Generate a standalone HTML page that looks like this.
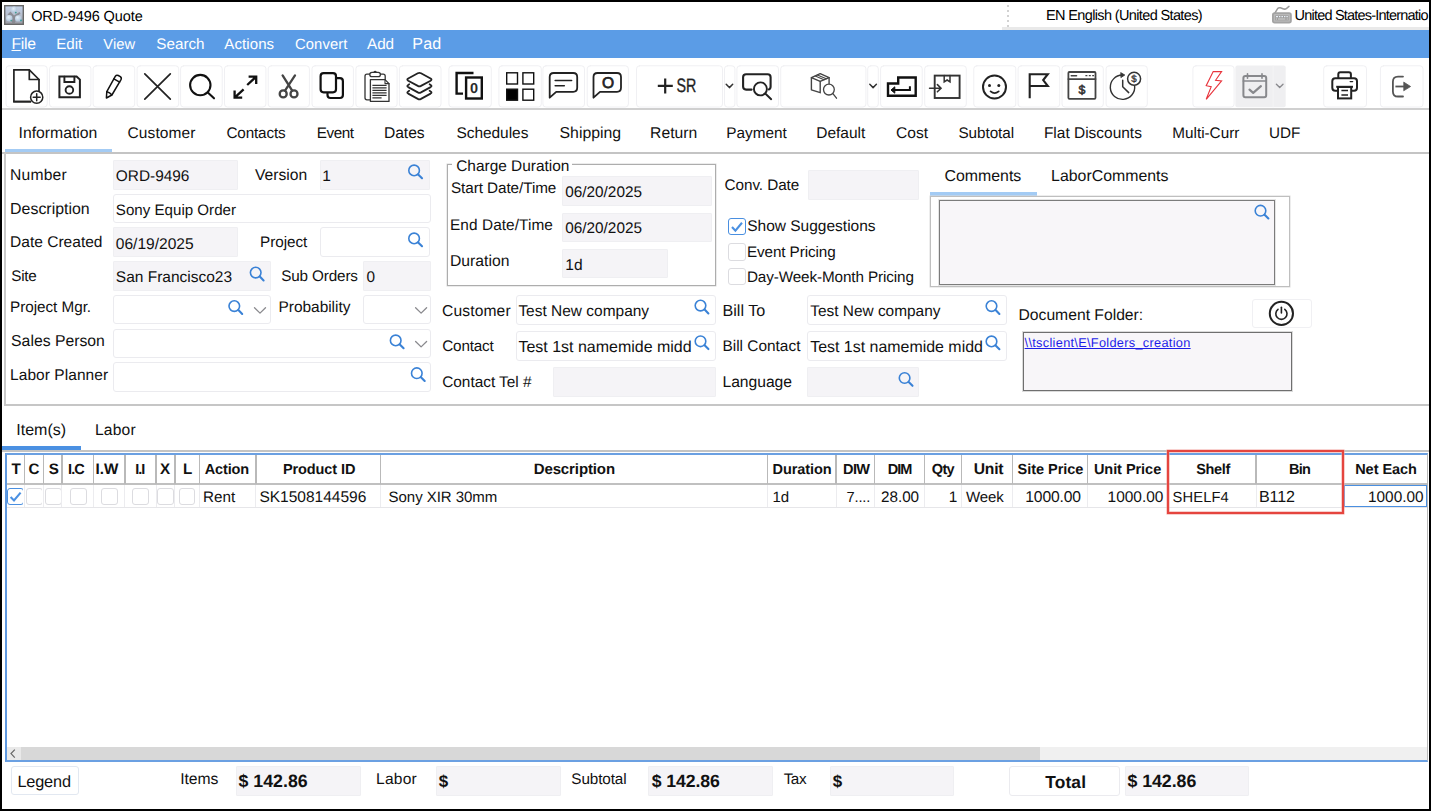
<!DOCTYPE html>
<html><head><meta charset="utf-8"><title>ORD-9496 Quote</title>
<style>
*{box-sizing:border-box;margin:0;padding:0}
html,body{width:1431px;height:811px;overflow:hidden;background:#000}
body{text-rendering:geometricPrecision;font-family:"Liberation Sans",sans-serif;font-size:15.3px;color:#1a1a1a;position:relative}
#win{position:absolute;left:2px;top:2px;width:1426.5px;height:807px;background:#fff;overflow:hidden}
.a{position:absolute;white-space:nowrap}
.x{color:#111}
/* all coords below are relative to page (0,0) via #pg wrapper */
#pg{position:absolute;left:-2px;top:-2px;width:1431px;height:811px}
#title{left:0;top:2px;width:1431px;height:28px;background:#fff}
#menu{left:0;top:30px;width:1431px;height:27.5px;background:#5b9ce6}
#tool{left:0;top:57.5px;width:1431px;height:51px;background:#fff}
.hline{position:absolute;height:2px;background:#c9c9c9}
.fld{position:absolute;border:1px solid #efeff2;background:#f5f4f7;border-radius:1px}
.fld.w{background:#fff;border-color:#ebebef;border-radius:3px}
.cb{position:absolute;width:18px;height:17.4px;border:1px solid #dcdce0;border-radius:3px;background:#fff}
.cb.on{border-color:#4a8fe0}
</style></head><body>
<div id="win"><div id="pg">

<!-- TITLE BAR -->
<div class="a" id="title">
  <svg class="a" style="left:4.3px;top:2.9px" width="20" height="20" viewBox="0 0 20 20"><defs><linearGradient id="ig" x1="0" y1="0" x2="0" y2="1"><stop offset="0" stop-color="#c3d2ea"/><stop offset="0.55" stop-color="#b4bccb"/><stop offset="1" stop-color="#98989f"/></linearGradient><radialGradient id="sp" cx="0.4" cy="0.35" r="0.7"><stop offset="0" stop-color="#e3eef8"/><stop offset="1" stop-color="#a9bfd6"/></radialGradient></defs><rect x="0.7" y="0.7" width="18.6" height="18.6" fill="url(#ig)" stroke="#686868" stroke-width="1.4"/><path d="M3.5 9.5L6.5 6.6L10 10.5L15.5 7L16.5 8.5L13 11.5L10.8 18H8.2L6.8 11.8Z" fill="#85858c" opacity="0.85"/><circle cx="10.1" cy="4.6" r="3" fill="url(#sp)"/><circle cx="5.3" cy="13.3" r="3.2" fill="url(#sp)"/><circle cx="14.2" cy="13.4" r="3.2" fill="url(#sp)"/><circle cx="11.8" cy="7.6" r="0.9" fill="#3f9c90"/><circle cx="7.2" cy="15.6" r="0.8" fill="#3f9c90"/><circle cx="17" cy="15.4" r="0.9" fill="#2f9fa0"/></svg>
    <div class="a" style="left:1007.4px;top:3.2px;width:2px;height:25.4px;background:repeating-linear-gradient(to bottom,#d2d2d2 0,#d2d2d2 2px,transparent 2px,transparent 4.9px)"></div>
    <svg class="a" style="left:1270px;top:3px" width="24" height="20" viewBox="1270 5 24 20"><path d="M1275 12.8L1277.6 8.6Q1278.6 7.4 1280.4 7.8L1283 8.8Q1285 9.6 1286.6 8.4L1289 6.4" fill="none" stroke="#9a9a9a" stroke-width="1.5" stroke-linecap="round"/><rect x="1272.9" y="13.2" width="18" height="9.4" rx="1.8" fill="#b9b9b9" stroke="#a3a3a3" stroke-width="1.8"/><rect x="1275.2" y="15.4" width="13.4" height="5" fill="#9e9e9e"/><path d="M1276 16.6h2M1279 16.6h1.4M1281.4 16.6h1.6M1284 16.6h1.4M1286.4 16.6h1.4" stroke="#e8eef6" stroke-width="1.1"/><path d="M1276 19h1M1278 19h7.4M1286.6 19h1.2" stroke="#d4d4d4" stroke-width="1.2"/></svg>
  </div>

<div class="a" id="tline" style="left:1002px;top:27.2px;width:1427px;height:2.6px;background:#e9e9e9"></div>
<!-- MENU BAR -->
<div class="a" id="menu">
</div>

<!-- TOOLBAR -->
<div class="a" id="tool"></div>
<!--TB0--><svg class="a" style="left:0;top:57px" width="1431" height="53" viewBox="0 57 1431 53" fill="none" stroke-linecap="round" stroke-linejoin="round">
<g fill="#fff" stroke="#f0f0f3" stroke-width="1">
<rect x="6.0" y="65.8" width="41.2" height="41.2" rx="3"/><rect x="49.5" y="65.8" width="41.4" height="41.2" rx="3"/><rect x="93.1" y="65.8" width="41.6" height="41.2" rx="3"/><rect x="137.1" y="65.8" width="41.6" height="41.2" rx="3"/><rect x="180.6" y="65.8" width="41.6" height="41.2" rx="3"/><rect x="224.5" y="65.8" width="41.4" height="41.2" rx="3"/><rect x="268.2" y="65.8" width="41.2" height="41.2" rx="3"/><rect x="312.0" y="65.8" width="41.4" height="41.2" rx="3"/><rect x="355.9" y="65.8" width="41.2" height="41.2" rx="3"/><rect x="399.4" y="65.8" width="41.6" height="41.2" rx="3"/>
<rect x="448.9" y="65.8" width="42.4" height="41.2" rx="3"/><rect x="498.9" y="65.8" width="42.4" height="41.2" rx="3"/><rect x="542.9" y="65.8" width="41.6" height="41.2" rx="3"/><rect x="587.2" y="65.8" width="41.2" height="41.2" rx="3"/>
<rect x="636.5" y="65.8" width="86.0" height="41.2" rx="3"/><rect x="724.5" y="65.8" width="10.4" height="41.2" rx="3"/><rect x="736.9" y="65.8" width="41.6" height="41.2" rx="3"/><rect x="780.7" y="65.8" width="85.2" height="41.2" rx="3"/><rect x="867.7" y="65.8" width="10.6" height="41.2" rx="3"/><rect x="880.6" y="65.8" width="41.6" height="41.2" rx="3"/><rect x="924.7" y="65.8" width="41.6" height="41.2" rx="3"/>
<rect x="973.8" y="65.8" width="42.0" height="41.2" rx="3"/><rect x="1018.1" y="65.8" width="41.6" height="41.2" rx="3"/><rect x="1062.0" y="65.8" width="41.3" height="41.2" rx="3"/><rect x="1106.1" y="65.8" width="41.2" height="41.2" rx="3"/>
<rect x="1192.9" y="65.8" width="41.2" height="41.2" rx="3"/>
<rect x="1323.7" y="65.8" width="42.8" height="41.2" rx="3"/><rect x="1380.4" y="65.8" width="42.6" height="41.2" rx="3"/>
</g>
<rect x="1235.4" y="65.5" width="50.3" height="41.8" rx="2" fill="#efeff1"/><rect x="1272.6" y="65.5" width="1" height="41.8" fill="#f4f4f6"/>
<!-- 1 new doc -->
<g stroke="#222" stroke-width="1.7"><path d="M13.9 69.8H29.3L39 79.5V91.5M30.5 101.7H13.9Z" /><path d="M13.9 69.8V101.7H30.3"/><path d="M29.3 70V79.5H39"/><circle cx="36.7" cy="97.2" r="6.1" fill="#fff" stroke-width="1.5"/><path d="M33.2 97.2H40.2M36.7 93.7V100.7" stroke-width="1.5"/></g>
<!-- 2 save -->
<g stroke="#222" stroke-width="2" stroke-linejoin="miter"><path d="M59.4 76.5H76.6L79.9 79.6V97.2H59.4Z"/><path d="M64.4 76.8V82H74.4V76.8" stroke-width="1.9"/><circle cx="69.4" cy="90" r="3.8" stroke-width="1.9"/></g>
<!-- 3 pencil -->
<g stroke="#111" stroke-width="1.5"><path d="M106.4 98L106.8 91.6L115.4 76.1Q116.5 74.6 118.3 75.5L120.3 76.6Q121.9 77.7 121 79.6L111.9 95Z"/><path d="M106.9 91.7Q109.8 92.2 111.7 94.8"/><path d="M113.9 78.8L119.6 82.1"/></g>
<!-- 4 X -->
<g stroke="#222" stroke-width="1.7"><path d="M144.8 73.9L170.3 99.1M170.3 73.9L144.8 99.1"/></g>
<!-- 5 search -->
<g stroke="#111" stroke-width="2.1"><circle cx="200.3" cy="85.1" r="10.2"/><path d="M207.8 92.6L214 98.3"/></g>
<!-- 6 expand -->
<g stroke="#111" stroke-width="2.3" stroke-linecap="butt" stroke-linejoin="miter"><path d="M247.2 85L255.6 77.2M248.6 76.7H256.2V83.9"/><path d="M243.6 89.3L235.2 97.1M234.6 90.4V97.7H242.2"/></g>
<!-- 7 scissors -->
<g stroke="#444" stroke-width="2.3"><path d="M282.6 75.4L292.2 90.6M295 75.4L285 90.6"/><circle cx="283.2" cy="93.9" r="3.5"/><circle cx="294" cy="93.9" r="3.5"/></g>
<!-- 8 copy -->
<g stroke="#111" stroke-width="2.2"><path d="M337.3 78.2H339.9Q342.9 78.2 342.9 81.2V95Q342.9 98 339.9 98H330.5Q327.5 98 327.5 95V93.6"/><rect x="320.6" y="73.2" width="15.4" height="19.1" rx="3"/></g>
<!-- 9 paste -->
<g stroke="#333" stroke-width="1.3"><rect x="365" y="74.2" width="20.2" height="25.6" rx="2"/><rect x="369.8" y="72.3" width="10.6" height="4.4" rx="2.2" fill="#fff"/><path d="M374 72.1Q375.1 70.6 376.2 72.1"/><path d="M370.4 79.6H385L389 83.6V101.4H370.4Z" fill="#fff"/><path d="M385 79.6V83.6H389" stroke-width="1.1"/><path d="M372.4 85.4H386.6M372.4 87.9H386.6M372.4 90.4H386.6M372.4 92.9H386.6M372.4 95.4H386.6M372.4 97.9H381.6" stroke-width="1.2" stroke-linecap="butt"/></g>
<!-- 10 layers -->
<g stroke="#222" stroke-width="1.8"><path d="M417.8 73.3Q419.4 72.5 421 73.3L430.6 78.5Q432.4 79.6 430.6 80.7L421 85.9Q419.4 86.7 417.8 85.9L408.2 80.7Q406.4 79.6 408.2 78.5Z"/><path d="M409.2 84.3L408.2 84.9Q406.4 86 408.2 87.1L417.8 92.4Q419.4 93.2 421 92.4L430.6 87.1Q432.4 86 430.6 84.9L429.6 84.3"/><path d="M409.2 90.8L408.2 91.4Q406.4 92.5 408.2 93.6L417.8 98.9Q419.4 99.7 421 98.9L430.6 93.6Q432.4 92.5 430.6 91.4L429.6 90.8"/></g>
<!-- 11 copy 0 -->
<g stroke="#111" stroke-width="2.4" stroke-linejoin="miter" stroke-linecap="butt"><path d="M473.5 73H456.6V93.6H463"/><rect x="466.1" y="77.5" width="15.7" height="21" fill="#fff"/></g>
<text x="474" y="93.2" font-family="Liberation Sans, sans-serif" font-weight="bold" font-size="14.5" fill="#2a2a2a" text-anchor="middle">0</text>
<!-- 12 grid -->
<g stroke="#111" stroke-width="1.4" stroke-linejoin="miter"><rect x="506.7" y="72.8" width="10.8" height="11.2"/><rect x="522.9" y="72.8" width="10.8" height="11.2"/><rect x="506.7" y="89.2" width="10.8" height="11" fill="#000"/><rect x="522.9" y="89.2" width="10.8" height="11"/></g>
<!-- 13 chat lines -->
<g stroke="#222" stroke-width="1.8"><path d="M549.7 97.7V77Q549.7 73 553.7 73H573.2Q577.2 73 577.2 77V87.8Q577.2 91.8 573.2 91.8H556.2Z"/><path d="M555.2 80.5H571.6M555.2 85.8H564.3" stroke-width="1.6"/></g>
<!-- 14 chat O -->
<g stroke="#222" stroke-width="1.8"><path d="M593.5 97.7V77Q593.5 73 597.5 73H617Q621 73 621 77V87.8Q621 91.8 617 91.8H600Z"/></g>
<text x="608.1" y="88.4" font-family="Liberation Sans, sans-serif" font-size="15.6" fill="#222" stroke="#222" stroke-width="0.7" text-anchor="middle">O</text>
<!-- 15 +SR -->
<g stroke="#222" stroke-width="2.2" stroke-linecap="butt"><path d="M657.8 85.9H672.8M665.2 78.4V93.4"/></g>
<text x="676.6" y="92.4" font-family="Liberation Sans, sans-serif" font-size="19.4" fill="#222" stroke="#222" stroke-width="0.35" textLength="19.8" lengthAdjust="spacingAndGlyphs">SR</text>
<!-- 16 chevron -->
<path d="M726.2 84.3L729.4 87.6L732.7 84.3" stroke="#333" stroke-width="1.5"/>
<!-- 17 screen search -->
<g stroke="#222" stroke-width="2.1"><path d="M751.6 89.6H746.1Q743.1 89.6 743.1 86.6V77.3Q743.1 74.3 746.1 74.3H767.6Q770.6 74.3 770.6 77.3V86.6Q770.6 89 768.8 89.5"/><circle cx="760.4" cy="88.9" r="6.5" fill="#fff" stroke-width="1.9"/><path d="M765.5 93.8L771.2 99.2" stroke-width="1.9"/></g>
<!-- 18 box search -->
<g stroke="#444" stroke-width="1.4"><path d="M811.4 77.7L820.2 73.7L829.1 77.7L820.2 81.4Z"/><path d="M811.4 77.7V89.8L820.2 92.7V81.4"/><path d="M829.1 77.7V83.5"/><path d="M815.2 76L824 79.8M817.4 75L826.3 78.8" stroke-width="1.1"/><circle cx="828.9" cy="89.6" r="5.4" fill="#fff" stroke-width="1.3"/><path d="M832.9 93.6L836.5 98.2" stroke-width="1.3"/></g>
<!-- 19 chevron -->
<path d="M869.8 84.3L873.1 87.6L876.4 84.3" stroke="#333" stroke-width="1.5"/>
<!-- 20 enter -->
<g stroke="#111" stroke-width="2.4" stroke-linejoin="miter" stroke-linecap="butt"><path d="M898.2 77.5H915.7V95.7H888V83.5H898.2Z"/><path d="M909.9 86.3V90H893.5" stroke-width="2"/><path d="M891 90L894.8 86.8V93.2Z" fill="#111" stroke-width="1"/></g>
<!-- 21 box in -->
<g stroke="#333" stroke-width="1.9" stroke-linejoin="miter"><rect x="934.7" y="75.6" width="24.9" height="22.4"/><path d="M944.2 75.6V81.8L947.1 80L950 81.8V75.6" stroke-width="1.5"/><path d="M929.6 88.2H940.6M937.4 84.6L941 88.2L937.4 91.8" stroke-width="1.6"/></g>
<!-- 22 smiley -->
<g stroke="#222" stroke-width="2"><circle cx="994.5" cy="87" r="11.5"/><circle cx="989.5" cy="85.5" r="1.5" fill="#222" stroke="none"/><circle cx="998.8" cy="85.5" r="1.5" fill="#222" stroke="none"/><path d="M990.6 91.4Q994.6 94.8 998.7 91.4" stroke-width="1.8"/></g>
<!-- 23 flag -->
<g stroke="#222" stroke-width="2.1" stroke-linejoin="miter" stroke-linecap="butt"><path d="M1029.7 98.3V74.2H1047.8L1043.2 80.1L1047.8 86H1029.7"/></g>
<!-- 24 $ window -->
<g stroke="#444" stroke-width="1.8" stroke-linejoin="miter"><rect x="1068.4" y="72" width="27.1" height="26.8" rx="1"/><path d="M1068.4 79.1H1095.5" /><path d="M1071.2 75.7H1076.6" stroke-width="1.4"/><path d="M1085.4 75.7H1087.4M1088.8 75.7H1090.8M1092.2 75.7H1094" stroke-width="1.2" stroke-linecap="butt"/></g>
<text x="1082" y="93.6" font-family="Liberation Sans, sans-serif" font-size="12.4" fill="#333" stroke="#333" stroke-width="0.6" text-anchor="middle">$</text>
<!-- 25 clock $ -->
<g stroke="#333" stroke-width="1.4"><path d="M1122.3 75A12.2 12.2 0 1 0 1134.6 85.6"/><path d="M1121 72.8L1124.8 75L1121.2 77.4Z" fill="#333" stroke-width="0.8"/><path d="M1122.7 80.2V86.8L1128.7 92.6" stroke-width="1.5"/><circle cx="1134.1" cy="78.8" r="6.5" fill="#fff" stroke-width="1.5"/></g>
<text x="1134.1" y="82.3" font-family="Liberation Sans, sans-serif" font-size="9.8" fill="#333" stroke="#333" stroke-width="0.35" text-anchor="middle">$</text>
<!-- 26 lightning -->
<path d="M1213.2 71.6H1221.6L1215.6 80.2L1221.6 80.9L1206.2 99.3L1211.2 86.6L1206.2 85.7Z" stroke="#e8343c" stroke-width="1.1" stroke-linejoin="miter"/>
<!-- 27 calendar -->
<g stroke="#87888c" stroke-width="2"><rect x="1243.4" y="75.9" width="22.8" height="21.4" rx="2"/><path d="M1243.4 81H1266.2" stroke-width="1.7"/><path d="M1247.5 73.8V78.2M1262 73.8V78.2" stroke-width="1.6"/><path d="M1249.5 89.7L1253.2 92.8L1260.9 86.1" stroke-width="2.2"/></g>
<path d="M1276.4 84.3L1279.7 87.4L1283 84.3" stroke="#8a8a8e" stroke-width="1.4"/>
<!-- 29 printer -->
<g stroke="#222" stroke-width="2"><rect x="1332.3" y="78.3" width="24.7" height="12.4" rx="3"/><path d="M1338.3 78V74.2Q1338.3 72.2 1340.3 72.2H1348.9Q1350.9 72.2 1350.9 74.2V78"/><rect x="1338" y="87" width="13.2" height="11.4" fill="#fff" stroke-linejoin="miter"/><path d="M1336.2 86.8H1353" stroke-linecap="butt"/><path d="M1341.4 90.6H1348M1341.4 94.9H1348" stroke-width="1.5" stroke-linecap="butt"/><path d="M1350.2 81.6H1352.6" stroke-width="1.4"/></g>
<!-- 30 exit -->
<g stroke="#555" stroke-width="1.8"><path d="M1403 76.6H1398Q1392.9 76.6 1392.9 81.7V91.4Q1392.9 96.5 1398 96.5H1403"/><path d="M1395.4 86.5H1404.4" stroke-linecap="butt"/><path d="M1404 82.3L1410.6 86.5L1404 90.6Z" fill="#555" stroke-width="0.8"/></g>
</svg>
<!--TB1-->
<div class="hline" style="left:2px;top:108.3px;width:1427px;height:1.7px;background:#d0d0d0"></div>
<div class="a" style="left:5px;top:148.5px;width:107px;height:3.5px;background:#a3cbf4"></div>
<div class="hline" style="left:2px;top:152px;width:1427px;height:1.6px;background:#c4c4c4"></div>
<div class="a" style="left:4.4px;top:153px;width:1.6px;height:251px;background:#c9c9c9"></div>
<div class="hline" style="left:4.4px;top:404px;width:1425px;height:1.6px;background:#c6c6c6"></div>
<!-- left column -->
<div class="fld" style="left:113.4px;top:160px;width:125px;height:29.7px"></div>
<div class="fld" style="left:319.5px;top:160px;width:110.2px;height:29.7px"></div>
<div class="fld w" style="left:113.4px;top:193.7px;width:318px;height:29.7px"></div>
<div class="fld" style="left:113.4px;top:227.4px;width:125px;height:29.7px"></div>
<div class="fld w" style="left:319.5px;top:227.4px;width:110.2px;height:29.7px"></div>
<div class="fld" style="left:113.4px;top:261.1px;width:157.2px;height:29.7px"></div>
<div class="fld" style="left:363.4px;top:261.1px;width:68px;height:29.7px"></div>
<div class="fld w" style="left:113.4px;top:294.8px;width:157.2px;height:29.7px"></div>
<div class="fld w" style="left:363.4px;top:294.8px;width:68px;height:29.7px"></div>
<div class="fld w" style="left:113.4px;top:328.5px;width:318px;height:29.7px"></div>
<div class="fld w" style="left:113.4px;top:362.2px;width:318px;height:29.7px"></div>
<!-- charge duration -->
<div class="a" style="left:447px;top:164px;width:269px;height:121.6px;border:1px solid #adadad;box-shadow:0 0 0 0.5px #d8d8d8"></div>
<div class="fld" style="left:562px;top:176.2px;width:149.8px;height:29.7px"></div>
<div class="fld" style="left:562px;top:212.7px;width:149.8px;height:29.7px"></div>
<div class="fld" style="left:562px;top:248.8px;width:105.8px;height:29.7px"></div>
<!-- conv date & checkboxes -->
<div class="fld" style="left:808.4px;top:170.2px;width:111px;height:29.7px"></div>
<div class="cb on" style="left:728px;top:217.6px"><svg width="15" height="15" viewBox="0 0 15 15" style="position:absolute;left:0;top:0"><path d="M3 8L6.4 11.6L13 3.8" fill="none" stroke="#4a90e2" stroke-width="2.1"/></svg></div>
<div class="cb" style="left:728px;top:243.2px"></div>
<div class="cb" style="left:728px;top:267.8px"></div>
<!-- customer block -->
<div class="fld w" style="left:516.3px;top:295px;width:199.4px;height:29.7px;padding-left:2px"></div>
<div class="fld w" style="left:516.3px;top:331px;width:199.4px;height:29.7px;padding-left:2px"></div>
<div class="fld" style="left:553.3px;top:367.3px;width:162.4px;height:29.7px"></div>
<div class="fld w" style="left:807.4px;top:295px;width:199.4px;height:29.7px;padding-left:2px"></div>
<div class="fld w" style="left:807.4px;top:331px;width:199.4px;height:29.7px;padding-left:2px"></div>
<div class="fld" style="left:807.4px;top:367.3px;width:111.8px;height:29.7px"></div>
<!-- comments -->
<div class="a" style="left:929.7px;top:191.8px;width:107px;height:4px;background:#a3cbf4"></div>
<div class="a" style="left:929.7px;top:195.8px;width:360.8px;height:91px;border:1px solid #bfbfbf;background:#fff;box-shadow:0 0 0 0.5px #dcdcdc"></div>
<div class="a" style="left:939.4px;top:199.8px;width:335.6px;height:84.8px;border:1px solid #7c7c7c;box-shadow:0 0 0 1px rgba(0,0,0,0.10);background:#f8f6f9"></div>
<!-- doc folder -->
<div class="a" style="left:1251.8px;top:299.4px;width:60.2px;height:28.2px;border:1px solid #f0f0f3;border-radius:3px;background:#fff"></div>
<svg class="a" style="left:1268px;top:300px" width="27" height="27" viewBox="0 0 27 27" fill="none" stroke="#222" stroke-linecap="round"><circle cx="13.4" cy="13.4" r="11.6" stroke-width="2"/><path d="M10 9.3A5.6 5.6 0 1 0 16.8 9.3" stroke-width="1.6"/><path d="M13.4 7.2V13" stroke-width="1.6"/></svg>
<div class="a" style="left:1023px;top:331.6px;width:268.6px;height:59px;border:1px solid #6f6f6f;box-shadow:0 0 0 1px rgba(0,0,0,0.14);background:#f8f6f9"></div>
<svg class="a" style="left:0;top:153px" width="1431" height="250" viewBox="0 153 1431 250">
<g transform="translate(408.4 165)"><circle cx="5.7" cy="5.4" r="5.3" fill="none" stroke="#3a82d6" stroke-width="1.6"/><path d="M9.8 9.4L13.6 13.2" stroke="#3a82d6" stroke-width="2.1" stroke-linecap="round"/></g>
<g transform="translate(408.4 233)"><circle cx="5.7" cy="5.4" r="5.3" fill="none" stroke="#3a82d6" stroke-width="1.6"/><path d="M9.8 9.4L13.6 13.2" stroke="#3a82d6" stroke-width="2.1" stroke-linecap="round"/></g>
<g transform="translate(250 267.2)"><circle cx="5.7" cy="5.4" r="5.3" fill="none" stroke="#3a82d6" stroke-width="1.6"/><path d="M9.8 9.4L13.6 13.2" stroke="#3a82d6" stroke-width="2.1" stroke-linecap="round"/></g>
<g transform="translate(228.6 300.7)"><circle cx="5.7" cy="5.4" r="5.3" fill="none" stroke="#3a82d6" stroke-width="1.6"/><path d="M9.8 9.4L13.6 13.2" stroke="#3a82d6" stroke-width="2.1" stroke-linecap="round"/></g>
<g transform="translate(253.5 306.5)"><path d="M1 1.2L6.5 6.6L12 1.2" fill="none" stroke="#8a8a8e" stroke-width="1.3" stroke-linecap="round" stroke-linejoin="round"/></g>
<g transform="translate(414.6 306.5)"><path d="M1 1.2L6.5 6.6L12 1.2" fill="none" stroke="#8a8a8e" stroke-width="1.3" stroke-linecap="round" stroke-linejoin="round"/></g>
<g transform="translate(390 335)"><circle cx="5.7" cy="5.4" r="5.3" fill="none" stroke="#3a82d6" stroke-width="1.6"/><path d="M9.8 9.4L13.6 13.2" stroke="#3a82d6" stroke-width="2.1" stroke-linecap="round"/></g>
<g transform="translate(414.6 340.3)"><path d="M1 1.2L6.5 6.6L12 1.2" fill="none" stroke="#8a8a8e" stroke-width="1.3" stroke-linecap="round" stroke-linejoin="round"/></g>
<g transform="translate(411.1 367.8)"><circle cx="5.7" cy="5.4" r="5.3" fill="none" stroke="#3a82d6" stroke-width="1.6"/><path d="M9.8 9.4L13.6 13.2" stroke="#3a82d6" stroke-width="2.1" stroke-linecap="round"/></g>
<g transform="translate(694.8 300.2)"><circle cx="5.7" cy="5.4" r="5.3" fill="none" stroke="#3a82d6" stroke-width="1.6"/><path d="M9.8 9.4L13.6 13.2" stroke="#3a82d6" stroke-width="2.1" stroke-linecap="round"/></g>
<g transform="translate(694.8 335.9)"><circle cx="5.7" cy="5.4" r="5.3" fill="none" stroke="#3a82d6" stroke-width="1.6"/><path d="M9.8 9.4L13.6 13.2" stroke="#3a82d6" stroke-width="2.1" stroke-linecap="round"/></g>
<g transform="translate(985.8 300.7)"><circle cx="5.7" cy="5.4" r="5.3" fill="none" stroke="#3a82d6" stroke-width="1.6"/><path d="M9.8 9.4L13.6 13.2" stroke="#3a82d6" stroke-width="2.1" stroke-linecap="round"/></g>
<g transform="translate(985.8 336)"><circle cx="5.7" cy="5.4" r="5.3" fill="none" stroke="#3a82d6" stroke-width="1.6"/><path d="M9.8 9.4L13.6 13.2" stroke="#3a82d6" stroke-width="2.1" stroke-linecap="round"/></g>
<g transform="translate(898.9 372.6)"><circle cx="5.7" cy="5.4" r="5.3" fill="none" stroke="#3a82d6" stroke-width="1.6"/><path d="M9.8 9.4L13.6 13.2" stroke="#3a82d6" stroke-width="2.1" stroke-linecap="round"/></g>
<g transform="translate(1254.8 205.3)"><circle cx="5.7" cy="5.4" r="5.3" fill="none" stroke="#3a82d6" stroke-width="1.6"/><path d="M9.8 9.4L13.6 13.2" stroke="#3a82d6" stroke-width="2.1" stroke-linecap="round"/></g>
</svg>
<!-- GRID -->
<div class="a" style="left:2px;top:446px;width:79px;height:4px;background:#4a90e2"></div>
<div class="hline" style="left:2px;top:450px;width:1427px;height:1.5px;background:#c4c4c4"></div>
<div class="a" style="left:5px;top:453px;width:1423px;height:309px;border:1.6px solid #4a8fe0;border-top:2px solid #6ba0e2;border-left:2px solid #5f99e0;border-bottom:2px solid #6ba0e2;border-right-color:#b9b9b9;background:#fff"></div>
<div class="a" style="left:6.6px;top:455px;width:1420.5px;height:28.4px;background:#fff"></div>
<div class="a" style="left:6.6px;top:483.2px;width:1420.5px;height:1.7px;background:#c0c0c0"></div>
<div class="a" style="left:23.8px;top:455px;width:1.7px;height:29px;background:#b9b9b9"></div>
<div class="a" style="left:24.1px;top:485px;width:1px;height:22px;background:#ececef"></div>
<div class="a" style="left:42.8px;top:455px;width:1.7px;height:29px;background:#b9b9b9"></div>
<div class="a" style="left:43.1px;top:485px;width:1px;height:22px;background:#ececef"></div>
<div class="a" style="left:61.2px;top:455px;width:1.7px;height:29px;background:#b9b9b9"></div>
<div class="a" style="left:61.5px;top:485px;width:1px;height:22px;background:#ececef"></div>
<div class="a" style="left:92.6px;top:455px;width:1.7px;height:29px;background:#b9b9b9"></div>
<div class="a" style="left:92.9px;top:485px;width:1px;height:22px;background:#ececef"></div>
<div class="a" style="left:124.0px;top:455px;width:1.7px;height:29px;background:#b9b9b9"></div>
<div class="a" style="left:124.3px;top:485px;width:1px;height:22px;background:#ececef"></div>
<div class="a" style="left:155.2px;top:455px;width:1.7px;height:29px;background:#b9b9b9"></div>
<div class="a" style="left:155.5px;top:485px;width:1px;height:22px;background:#ececef"></div>
<div class="a" style="left:174.0px;top:455px;width:1.7px;height:29px;background:#b9b9b9"></div>
<div class="a" style="left:174.3px;top:485px;width:1px;height:22px;background:#ececef"></div>
<div class="a" style="left:198.7px;top:455px;width:1.7px;height:29px;background:#b9b9b9"></div>
<div class="a" style="left:199.0px;top:485px;width:1px;height:22px;background:#ececef"></div>
<div class="a" style="left:254.9px;top:455px;width:1.7px;height:29px;background:#b9b9b9"></div>
<div class="a" style="left:255.2px;top:485px;width:1px;height:22px;background:#ececef"></div>
<div class="a" style="left:379.7px;top:455px;width:1.7px;height:29px;background:#b9b9b9"></div>
<div class="a" style="left:380.0px;top:485px;width:1px;height:22px;background:#ececef"></div>
<div class="a" style="left:766.8px;top:455px;width:1.7px;height:29px;background:#b9b9b9"></div>
<div class="a" style="left:767.1px;top:485px;width:1px;height:22px;background:#ececef"></div>
<div class="a" style="left:835.4px;top:455px;width:1.7px;height:29px;background:#b9b9b9"></div>
<div class="a" style="left:835.7px;top:485px;width:1px;height:22px;background:#ececef"></div>
<div class="a" style="left:873.7px;top:455px;width:1.7px;height:29px;background:#b9b9b9"></div>
<div class="a" style="left:874.0px;top:485px;width:1px;height:22px;background:#ececef"></div>
<div class="a" style="left:923.8px;top:455px;width:1.7px;height:29px;background:#b9b9b9"></div>
<div class="a" style="left:924.1px;top:485px;width:1px;height:22px;background:#ececef"></div>
<div class="a" style="left:960.7px;top:455px;width:1.7px;height:29px;background:#b9b9b9"></div>
<div class="a" style="left:961.0px;top:485px;width:1px;height:22px;background:#ececef"></div>
<div class="a" style="left:1011.5px;top:455px;width:1.7px;height:29px;background:#b9b9b9"></div>
<div class="a" style="left:1011.8px;top:485px;width:1px;height:22px;background:#ececef"></div>
<div class="a" style="left:1086.8px;top:455px;width:1.7px;height:29px;background:#b9b9b9"></div>
<div class="a" style="left:1087.1px;top:485px;width:1px;height:22px;background:#ececef"></div>
<div class="a" style="left:1167.2px;top:455px;width:1.7px;height:29px;background:#b9b9b9"></div>
<div class="a" style="left:1167.5px;top:485px;width:1px;height:22px;background:#ececef"></div>
<div class="a" style="left:1255.2px;top:455px;width:1.7px;height:29px;background:#b9b9b9"></div>
<div class="a" style="left:1255.5px;top:485px;width:1px;height:22px;background:#ececef"></div>
<div class="a" style="left:1342.7px;top:455px;width:1.7px;height:29px;background:#b9b9b9"></div>
<div class="a" style="left:1343.0px;top:485px;width:1px;height:22px;background:#ececef"></div>
<div class="a" style="left:6.6px;top:506.8px;width:1420.5px;height:1px;background:#e6e6e9"></div>
<div class="a" style="left:6.6px;top:485px;width:193px;height:22px;overflow:hidden">
<div class="cb on" style="left:0.9px;top:2.5px;width:16.6px;height:17.3px"><svg width="15" height="15" viewBox="0 0 15 15" style="position:absolute;left:0;top:0"><path d="M2.6 8L6 11.4L12.6 3.6" fill="none" stroke="#4a90e2" stroke-width="2.1"/></svg></div>
<div class="cb" style="left:19.7px;top:2.5px;width:16.6px;height:17.3px"></div>
<div class="cb" style="left:38.4px;top:2.5px;width:16.6px;height:17.3px"></div>
<div class="cb" style="left:63.5px;top:2.5px;width:16.6px;height:17.3px"></div>
<div class="cb" style="left:94.9px;top:2.5px;width:16.6px;height:17.3px"></div>
<div class="cb" style="left:125.8px;top:2.5px;width:16.6px;height:17.3px"></div>
<div class="cb" style="left:150.7px;top:2.5px;width:16.6px;height:17.3px"></div>
<div class="cb" style="left:172.2px;top:2.5px;width:16.6px;height:17.3px"></div>
<div class="a" style="left:16.6px;top:0;width:2.6px;height:22px;background:#fff"></div><div class="a" style="left:17.5px;top:0;width:1px;height:22px;background:#ececef"></div>
<div class="a" style="left:35.6px;top:0;width:2.6px;height:22px;background:#fff"></div><div class="a" style="left:36.5px;top:0;width:1px;height:22px;background:#ececef"></div>
<div class="a" style="left:54.0px;top:0;width:2.6px;height:22px;background:#fff"></div><div class="a" style="left:54.9px;top:0;width:1px;height:22px;background:#ececef"></div>
</div>
<div class="a" style="left:1344.2px;top:484.8px;width:82.8px;height:21.8px;border:1.3px solid #4a8fe0"></div>
<div class="a" style="left:1167.3px;top:450.2px;width:177.1px;height:63.4px;border:2px solid #e5453f;box-shadow:0 0 0 0.5px #f0a09c, inset 0 0 0 0.5px #f0a09c"></div>
<div class="a" style="left:6.6px;top:747.4px;width:1420.4px;height:12.2px;background:#f0f0f0"></div>
<div class="a" style="left:6.6px;top:747.4px;width:14px;height:12.2px;background:#e9e9e9"></div>
<div class="a" style="left:20.6px;top:747.4px;width:1019px;height:12.2px;background:#d8d8d8"></div>
<svg class="a" style="left:8px;top:748px" width="10" height="11" viewBox="0 0 10 11"><path d="M6.8 1.6L3 5.6L6.8 9.6" fill="none" stroke="#666" stroke-width="1.2"/></svg>
<!-- BOTTOM -->
<div class="a" style="left:11.3px;top:766.4px;width:68px;height:28.6px;border:1px solid #e2e8f1;border-radius:3px;background:#fff"></div>
<div class="fld" style="left:236px;top:766.3px;width:124.8px;height:29.7px"></div>
<div class="fld" style="left:436.2px;top:766.3px;width:124.8px;height:29.7px"></div>
<div class="fld" style="left:648.4px;top:766.3px;width:124.8px;height:29.7px"></div>
<div class="fld" style="left:829.5px;top:766.3px;width:124.8px;height:29.7px"></div>
<div class="fld" style="left:1124.5px;top:766.3px;width:124.8px;height:29.7px"></div>
<div class="a" style="left:1009px;top:766.4px;width:111px;height:29.2px;border:1px solid #ebebef;border-radius:3px;background:#fff"></div>
<!-- TEXT -->
<div class="a x" style="left:31.2px;top:9px;font-size:14.52px;line-height:17px;letter-spacing:-0.11px;color:#000">ORD-9496 Quote</div>
<div class="a x" style="left:1046.0px;top:8px;font-size:14.52px;line-height:17px;letter-spacing:-0.64px;color:#000">EN English (United States)</div>
<div class="a x" style="left:1294.6px;top:8px;font-size:14.52px;line-height:17px;letter-spacing:-0.81px;color:#000">United States-Internatio</div>
<div class="a x" style="left:11.5px;top:36px;font-size:15.77px;line-height:17px;letter-spacing:-0.28px;color:#fff"><u>F</u>ile</div>
<div class="a x" style="left:56.3px;top:36px;font-size:15.08px;line-height:17px;letter-spacing:-0.03px;color:#fff">Edit</div>
<div class="a x" style="left:103.3px;top:37px;font-size:14.71px;line-height:17px;letter-spacing:0.11px;color:#fff">View</div>
<div class="a x" style="left:156.3px;top:36px;font-size:15.24px;line-height:17px;color:#fff">Search</div>
<div class="a x" style="left:224.3px;top:36px;font-size:15.02px;line-height:17px;letter-spacing:0.09px;color:#fff">Actions</div>
<div class="a x" style="left:295.0px;top:37px;font-size:14.75px;line-height:17px;letter-spacing:0.13px;color:#fff">Convert</div>
<div class="a x" style="left:367.0px;top:36px;font-size:15.27px;line-height:17px;letter-spacing:-0.04px;color:#fff">Add</div>
<div class="a x" style="left:412.3px;top:36px;font-size:16.09px;line-height:17px;letter-spacing:0.17px;color:#fff">Pad</div>
<div class="a x" style="left:18.5px;top:125px;font-size:15.77px;line-height:17px">Information</div>
<div class="a x" style="left:127.5px;top:125px;font-size:15.49px;line-height:17px;letter-spacing:0.12px">Customer</div>
<div class="a x" style="left:226.5px;top:125px;font-size:15.28px;line-height:17px;letter-spacing:-0.16px">Contacts</div>
<div class="a x" style="left:316.8px;top:125px;font-size:15.28px;line-height:17px;letter-spacing:-0.47px">Event</div>
<div class="a x" style="left:383.9px;top:125px;font-size:15.65px;line-height:17px;letter-spacing:-0.03px">Dates</div>
<div class="a x" style="left:456.4px;top:125px;font-size:15.48px;line-height:17px;letter-spacing:-0.03px">Schedules</div>
<div class="a x" style="left:559.5px;top:125px;font-size:15.85px;line-height:17px">Shipping</div>
<div class="a x" style="left:650.1px;top:125px;font-size:15.71px;line-height:17px">Return</div>
<div class="a x" style="left:726.3px;top:125px;font-size:15.34px;line-height:17px;letter-spacing:-0.02px">Payment</div>
<div class="a x" style="left:816.2px;top:125px;font-size:15.51px;line-height:17px">Default</div>
<div class="a x" style="left:896.1px;top:125px;font-size:15.59px;line-height:17px;letter-spacing:-0.03px">Cost</div>
<div class="a x" style="left:958.5px;top:125px;font-size:15.28px;line-height:17px;letter-spacing:-0.06px">Subtotal</div>
<div class="a x" style="left:1043.9px;top:125px;font-size:15.48px;line-height:17px">Flat Discounts</div>
<div class="a x" style="left:1172.3px;top:125px;font-size:15.28px;line-height:17px">Multi-Curr</div>
<div class="a x" style="left:1269.1px;top:125px;font-size:15.28px;line-height:17px;letter-spacing:-0.07px">UDF</div>
<div class="a x" style="left:10.1px;top:167px;font-size:15.67px;line-height:17px;letter-spacing:0.19px">Number</div>
<div class="a x" style="left:10.1px;top:201px;font-size:15.91px;line-height:17px">Description</div>
<div class="a x" style="left:10.1px;top:234px;font-size:15.54px;line-height:17px">Date Created</div>
<div class="a x" style="left:11.2px;top:268px;font-size:15.28px;line-height:17px;letter-spacing:-0.24px">Site</div>
<div class="a x" style="left:10.1px;top:299px;font-size:15.28px;line-height:17px;letter-spacing:-0.04px">Project Mgr.</div>
<div class="a x" style="left:11.1px;top:333px;font-size:15.77px;line-height:17px">Sales Person</div>
<div class="a x" style="left:10.1px;top:367px;font-size:15.47px;line-height:17px;letter-spacing:0.07px">Labor Planner</div>
<div class="a x" style="left:255.0px;top:167px;font-size:15.67px;line-height:17px">Version</div>
<div class="a x" style="left:260.1px;top:234px;font-size:15.28px;line-height:17px;letter-spacing:-0.06px">Project</div>
<div class="a x" style="left:281.2px;top:268px;font-size:15.28px;line-height:17px;letter-spacing:-0.14px">Sub Orders</div>
<div class="a x" style="left:278.5px;top:299px;font-size:15.46px;line-height:17px;letter-spacing:-0.02px">Probability</div>
<div class="a x" style="left:115.8px;top:168px;font-size:15.42px;line-height:17px">ORD-9496</div>
<div class="a x" style="left:322.2px;top:168px;font-size:15.4px;line-height:17px">1</div>
<div class="a x" style="left:115.8px;top:202px;font-size:15.13px;line-height:17px">Sony Equip Order</div>
<div class="a x" style="left:115.8px;top:236px;font-size:15.55px;line-height:17px">06/19/2025</div>
<div class="a x" style="left:115.8px;top:269px;font-size:15.5px;line-height:17px">San Francisco23</div>
<div class="a x" style="left:366.4px;top:269px;font-size:15.4px;line-height:17px">0</div>
<div class="a x" style="left:456.2px;top:158px;font-size:15.44px;line-height:17px;background:#fff;padding:0 3px 0 4px;margin-left:-4px">Charge Duration</div>
<div class="a x" style="left:451.0px;top:180px;font-size:15.28px;line-height:17px;letter-spacing:-0.07px">Start Date/Time</div>
<div class="a x" style="left:450.0px;top:217px;font-size:15.4px;line-height:17px;letter-spacing:0.07px">End Date/Time</div>
<div class="a x" style="left:450.0px;top:253px;font-size:15.73px;line-height:17px">Duration</div>
<div class="a x" style="left:565.2px;top:184px;font-size:15.35px;line-height:17px">06/20/2025</div>
<div class="a x" style="left:565.2px;top:220px;font-size:15.35px;line-height:17px">06/20/2025</div>
<div class="a x" style="left:565.3px;top:257px;font-size:15.54px;line-height:17px;letter-spacing:0.06px">1d</div>
<div class="a x" style="left:724.6px;top:177px;font-size:15.28px;line-height:17px;letter-spacing:-0.06px">Conv. Date</div>
<div class="a x" style="left:747.2px;top:218px;font-size:15.51px;line-height:17px">Show Suggestions</div>
<div class="a x" style="left:746.9px;top:244px;font-size:15.28px;line-height:17px;letter-spacing:-0.10px">Event Pricing</div>
<div class="a x" style="left:746.9px;top:269px;font-size:15.28px;line-height:17px;letter-spacing:-0.11px">Day-Week-Month Pricing</div>
<div class="a x" style="left:442.0px;top:303px;font-size:15.63px;line-height:17px;letter-spacing:0.13px">Customer</div>
<div class="a x" style="left:442.2px;top:338px;font-size:15.28px;line-height:17px;letter-spacing:-0.16px">Contact</div>
<div class="a x" style="left:442.2px;top:374px;font-size:15.42px;line-height:17px;letter-spacing:-0.02px">Contact Tel #</div>
<div class="a x" style="left:518.4px;top:303px;font-size:15.48px;line-height:17px">Test New company</div>
<div class="a x" style="left:518.4px;top:339px;font-size:15.99px;line-height:17px">Test 1st namemide midd</div>
<div class="a x" style="left:722.5px;top:303px;font-size:16.16px;line-height:17px">Bill To</div>
<div class="a x" style="left:722.5px;top:338px;font-size:15.41px;line-height:17px">Bill Contact</div>
<div class="a x" style="left:722.5px;top:374px;font-size:15.66px;line-height:17px;letter-spacing:-0.02px">Language</div>
<div class="a x" style="left:810.2px;top:303px;font-size:15.43px;line-height:17px">Test New company</div>
<div class="a x" style="left:810.2px;top:339px;font-size:15.95px;line-height:17px">Test 1st namemide midd</div>
<div class="a x" style="left:944.5px;top:168px;font-size:15.89px;line-height:17px">Comments</div>
<div class="a x" style="left:1051.1px;top:168px;font-size:15.89px;line-height:17px">LaborComments</div>
<div class="a x" style="left:1018.5px;top:307px;font-size:15.7px;line-height:17px">Document Folder:</div>
<div class="a x" style="left:1024.6px;top:334px;font-size:12.75px;line-height:17px;letter-spacing:0.30px;color:#1c1ce8;text-decoration:underline">\\tsclient\E\Folders_creation</div>
<div class="a x" style="left:16.3px;top:422px;font-size:16.05px;line-height:17px">Item(s)</div>
<div class="a x" style="left:94.9px;top:422px;font-size:15.61px;line-height:17px;letter-spacing:0.22px">Labor</div>
<div class="a x" style="left:11.5px;top:461px;font-size:15.2px;line-height:17px;font-weight:bold">T</div>
<div class="a x" style="left:28.5px;top:461px;font-size:15.2px;line-height:17px;font-weight:bold">C</div>
<div class="a x" style="left:48.7px;top:461px;font-size:15.2px;line-height:17px;font-weight:bold">S</div>
<div class="a x" style="left:68.1px;top:462px;font-size:14.52px;line-height:17px;letter-spacing:-1.00px;font-weight:bold">I.C</div>
<div class="a x" style="left:95.6px;top:461px;font-size:15.24px;line-height:17px;font-weight:bold">I.W</div>
<div class="a x" style="left:135.2px;top:462px;font-size:14.52px;line-height:17px;letter-spacing:-0.98px;font-weight:bold">I.I</div>
<div class="a x" style="left:160.0px;top:461px;font-size:15.2px;line-height:17px;font-weight:bold">X</div>
<div class="a x" style="left:182.9px;top:461px;font-size:15.2px;line-height:17px;font-weight:bold">L</div>
<div class="a x" style="left:204.7px;top:462px;font-size:14.52px;line-height:17px;letter-spacing:-0.14px;font-weight:bold">Action</div>
<div class="a x" style="left:282.9px;top:462px;font-size:14.52px;line-height:17px;letter-spacing:-0.09px;font-weight:bold">Product ID</div>
<div class="a x" style="left:533.7px;top:461px;font-size:15.02px;line-height:17px;letter-spacing:-0.12px;font-weight:bold">Description</div>
<div class="a x" style="left:772.6px;top:462px;font-size:14.52px;line-height:17px;letter-spacing:-0.10px;font-weight:bold">Duration</div>
<div class="a x" style="left:843.1px;top:462px;font-size:14.52px;line-height:17px;letter-spacing:-0.66px;font-weight:bold">DIW</div>
<div class="a x" style="left:887.7px;top:462px;font-size:14.52px;line-height:17px;letter-spacing:-1.00px;font-weight:bold">DIM</div>
<div class="a x" style="left:931.8px;top:462px;font-size:14.52px;line-height:17px;letter-spacing:-0.66px;font-weight:bold">Qty</div>
<div class="a x" style="left:973.8px;top:461px;font-size:15.68px;line-height:17px;letter-spacing:-0.28px;font-weight:bold">Unit</div>
<div class="a x" style="left:1017.5px;top:462px;font-size:14.56px;line-height:17px;letter-spacing:-0.04px;font-weight:bold">Site Price</div>
<div class="a x" style="left:1093.9px;top:462px;font-size:14.52px;line-height:17px;letter-spacing:-0.05px;font-weight:bold">Unit Price</div>
<div class="a x" style="left:1196.2px;top:462px;font-size:14.52px;line-height:17px;letter-spacing:-0.34px;font-weight:bold">Shelf</div>
<div class="a x" style="left:1289.0px;top:462px;font-size:14.52px;line-height:17px;letter-spacing:-0.76px;font-weight:bold">Bin</div>
<div class="a x" style="left:1355.2px;top:462px;font-size:14.53px;line-height:17px;letter-spacing:-0.05px;font-weight:bold">Net Each</div>
<div class="a x" style="left:203.0px;top:489px;font-size:15.24px;line-height:17px">Rent</div>
<div class="a x" style="left:259.4px;top:489px;font-size:15.52px;line-height:17px">SK1508144596</div>
<div class="a x" style="left:388.6px;top:489px;font-size:15.02px;line-height:17px;letter-spacing:-0.05px">Sony XIR 30mm</div>
<div class="a x" style="left:772.6px;top:489px;font-size:15.02px;line-height:17px;letter-spacing:-0.25px">1d</div>
<div class="a x" style="left:846.4px;top:490px;font-size:14.71px;line-height:17px;letter-spacing:-0.13px">7....</div>
<div class="a x" style="left:881.0px;top:489px;font-size:15.26px;line-height:17px;letter-spacing:-0.02px">28.00</div>
<div class="a x" style="left:948.8px;top:489px;font-size:15.4px;line-height:17px">1</div>
<div class="a x" style="left:966.1px;top:489px;font-size:15.02px;line-height:17px;letter-spacing:-0.17px">Week</div>
<div class="a x" style="left:1025.3px;top:489px;font-size:15.66px;line-height:17px;letter-spacing:-0.15px">1000.00</div>
<div class="a x" style="left:1107.6px;top:489px;font-size:15.44px;line-height:17px">1000.00</div>
<div class="a x" style="left:1172.6px;top:490px;font-size:14.71px;line-height:17px;letter-spacing:0.10px">SHELF4</div>
<div class="a x" style="left:1259.0px;top:489px;font-size:16.09px;line-height:17px;letter-spacing:-0.14px">B112</div>
<div class="a x" style="left:1368.0px;top:489px;font-size:15.38px;line-height:17px">1000.00</div>
<div class="a x" style="left:17.4px;top:774px;font-size:16.31px;line-height:17px;letter-spacing:-0.16px">Legend</div>
<div class="a x" style="left:180.2px;top:771px;font-size:15.7px;line-height:17px;letter-spacing:-0.03px">Items</div>
<div class="a x" style="left:376.1px;top:771px;font-size:15.57px;line-height:17px;letter-spacing:0.22px">Labor</div>
<div class="a x" style="left:571.3px;top:771px;font-size:15.28px;line-height:17px;letter-spacing:-0.10px">Subtotal</div>
<div class="a x" style="left:783.7px;top:771px;font-size:15.28px;line-height:17px;letter-spacing:-0.46px">Tax</div>
<div class="a x" style="left:238.5px;top:773px;font-size:17.77px;line-height:17px;font-weight:bold">$ 142.86</div>
<div class="a x" style="left:438.7px;top:773px;font-size:17px;line-height:17px;font-weight:bold">$</div>
<div class="a x" style="left:651.8px;top:773px;font-size:17.67px;line-height:17px;letter-spacing:-0.09px;font-weight:bold">$ 142.86</div>
<div class="a x" style="left:832.8px;top:773px;font-size:17px;line-height:17px;font-weight:bold">$</div>
<div class="a x" style="left:1045.2px;top:774px;font-size:17.35px;line-height:17px;letter-spacing:0.17px;font-weight:bold">Total</div>
<div class="a x" style="left:1127.4px;top:773px;font-size:17.77px;line-height:17px;letter-spacing:-0.04px;font-weight:bold">$ 142.86</div>
</div></div>
</body></html>
